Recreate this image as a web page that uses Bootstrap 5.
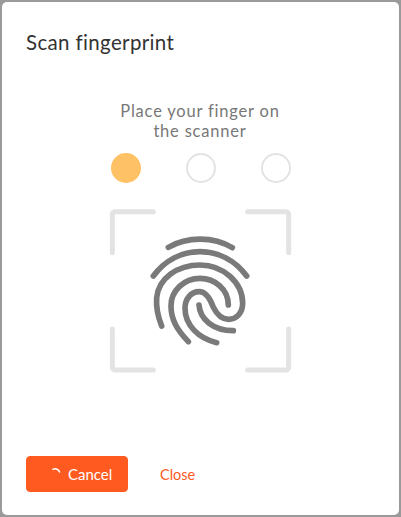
<!DOCTYPE html>
<html lang="en">
<head>
<meta charset="utf-8">
<title>Scan fingerprint</title>
<link href="https://cdn.jsdelivr.net/npm/bootstrap@5.3.0/dist/css/bootstrap.min.css" rel="stylesheet">
<style>
html,body{height:100%;}
body{background:#9a9a9a;font-family:"Lato","Noto Sans",sans-serif;padding:2px;overflow:hidden;}
.scan-card{height:513px;border:0;border-radius:5px;}
.scan-head{padding:28px 24px 0;}
.scan-title{font-size:20.5px;line-height:24px;font-weight:400;color:#333;margin:0;letter-spacing:.35px;}
.scan-body{padding:0 1px 0 0;margin-top:47px;}
.scan-msg{font-size:16.5px;line-height:20px;color:#777;letter-spacing:.8px;margin:0;}
.dots{width:180px;margin:12px 0 0 1px;}
.dot{width:30px;height:30px;border-radius:50%;border:2px solid #e3e3e3;}
.dot-on{background:#ffc166;border-color:#ffc166;}
.print{display:block;margin-top:17px;}
.scan-foot{padding:0 24px 23px;gap:32px;}
.btn-scan{background:#ff5a1f;border-color:#ff5a1f;color:#fff;width:102px;height:36px;font-size:15px;padding:0 0 0 22px;border-radius:4px;gap:7px;}
.btn-scan:hover{background:#ff5a1f;color:#fff;}
.spin{flex:none;}
.link-close{color:#ff5a1f;font-size:14.5px;text-decoration:none;padding:2px 0 0;}
</style>
</head>
<body>
<div class="card scan-card d-flex flex-column">
  <div class="scan-head"><h5 class="scan-title">Scan fingerprint</h5></div>
  <div class="scan-body d-flex flex-column align-items-center text-center flex-grow-1">
    <p class="scan-msg">Place your finger on<br>the scanner</p>
    <div class="dots d-flex justify-content-between">
      <span class="dot dot-on"></span><span class="dot"></span><span class="dot"></span>
    </div>
    <svg class="print" width="200" height="180" viewBox="0 0 600 540" fill="none" stroke-linecap="round" stroke-linejoin="round">
      <g stroke="#e3e3e3" stroke-width="15">
        <path d="M37 158V43a8 8 0 0 1 8-8H160"/>
        <path d="M443 35H558a8 8 0 0 1 8 8V158"/>
        <path d="M37 387V502a8 8 0 0 0 8 8H160"/>
        <path d="M566 387V502a8 8 0 0 1-8 8H443"/>
      </g>
      <g stroke="#7a7a7a" stroke-width="17">
        <path d="M205 142C262 109 340 109 397 143"/>
        <path d="M160 228C195 181 245 155 300 155C355 155 405 181 440 228"/>
        <path d="M185 378C172 345 168 320 170 293C176 235 232 195 300 195C370 195 428 248 428 310C428 338 410 358 385 358C362 358 350 342 340 322C330 295 318 275 298 275C272 275 255 298 255 325C255 375 295 415 350 428"/>
        <path d="M265 425C232 390 213 360 213 318C213 272 252 235 300 235C345 235 385 268 385 315"/>
        <path d="M297 315C300 358 340 392 400 392"/>
      </g>
    </svg>
  </div>
  <div class="scan-foot d-flex align-items-center">
    <button type="button" class="btn btn-scan d-flex align-items-center">
      <svg class="spin" width="12" height="12" viewBox="0 0 12 12" fill="none"><path d="M4 1.2A5.5 5.5 0 0 1 10.6 4" stroke="#fff" stroke-width="1.5" stroke-linecap="round"/></svg>
      <span>Cancel</span>
    </button>
    <a href="#" class="link-close">Close</a>
  </div>
</div>
<script src="https://cdn.jsdelivr.net/npm/bootstrap@5.3.0/dist/js/bootstrap.bundle.min.js"></script>
</body>
</html>
